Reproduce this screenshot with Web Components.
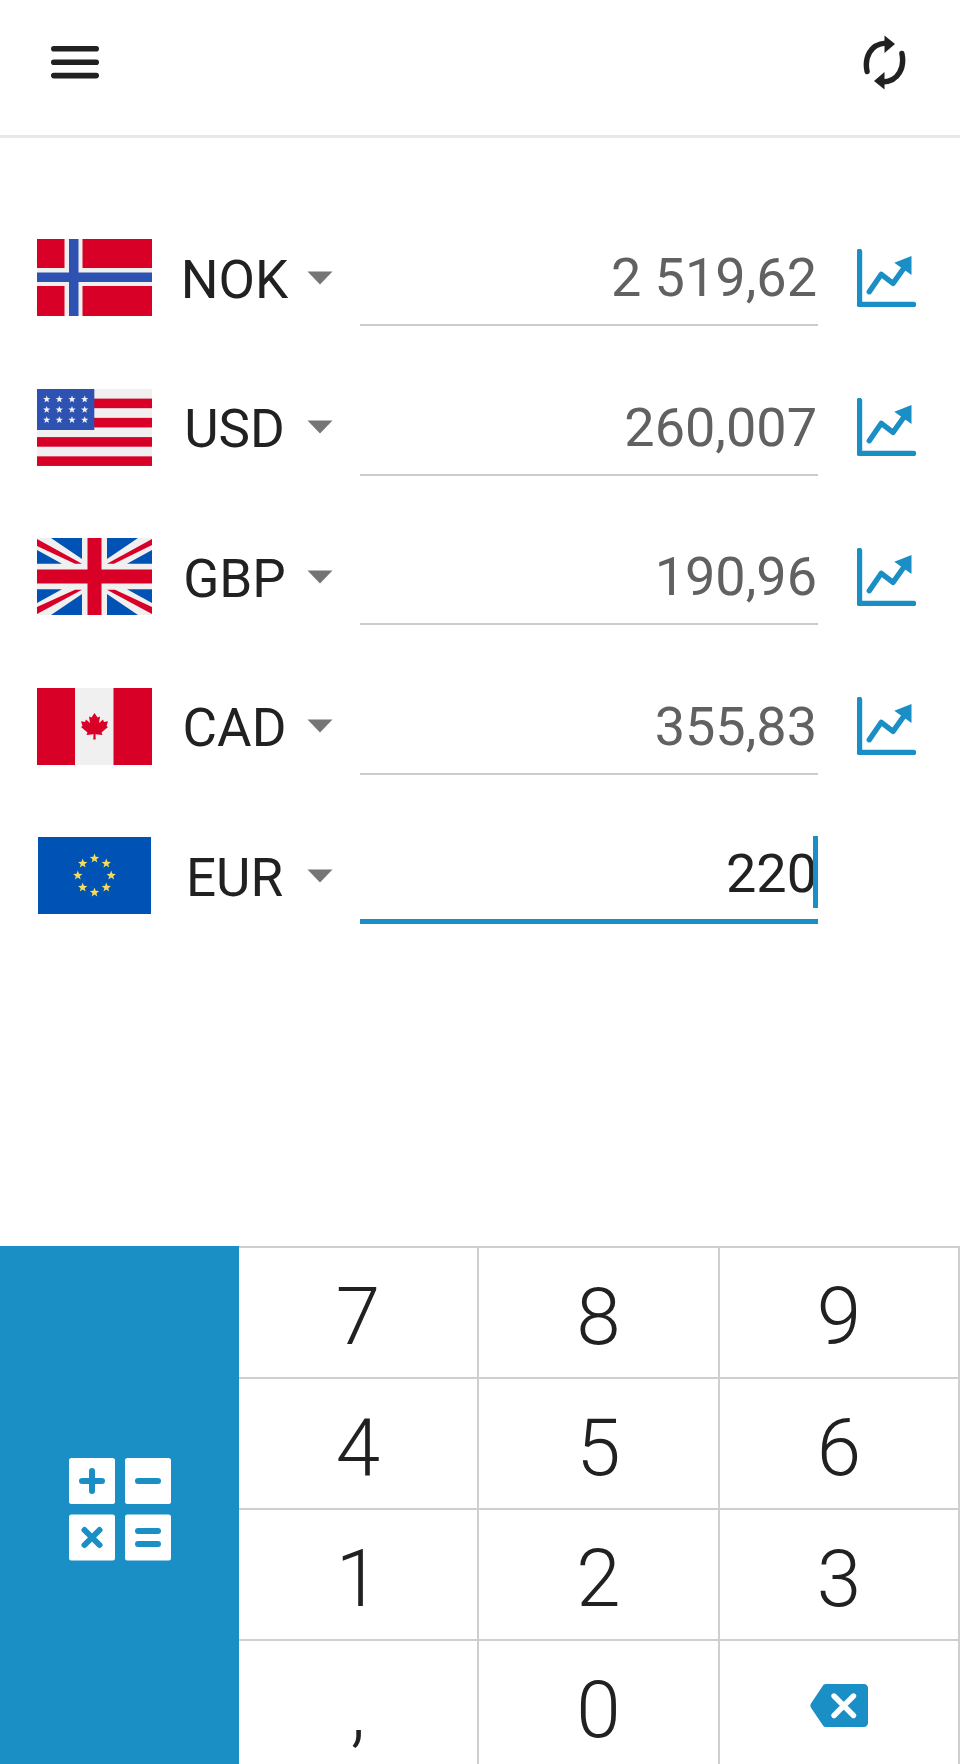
<!DOCTYPE html>
<html>
<head>
<meta charset="utf-8">
<title>Currency converter</title>
<style>
	html, body { margin: 0; height: 1764px; overflow: hidden; background: #fff; }
	body { font-family: Roboto, "Liberation Sans", sans-serif; }
</style>
</head>
<body>
<converter-app>
	<top-bar></top-bar>
	<currency-list>
		<currency-row code="NOK" value="2 519,62"></currency-row>
		<currency-row code="USD" value="260,007"></currency-row>
		<currency-row code="GBP" value="190,96"></currency-row>
		<currency-row code="CAD" value="355,83"></currency-row>
		<currency-row code="EUR" value="220" active></currency-row>
	</currency-list>
	<num-pad></num-pad>
</converter-app>

<script>
const RED = '#d80027';
const WHITE = '#f0f0f0';
const BLUE = '#0052b4';

function star(cx, cy, r, fill) {
	let pts = [];
	for (let i = 0; i < 10; i++) {
		const rad = i % 2 ? r * 0.42 : r;
		const a = -Math.PI / 2 + i * Math.PI / 5;
		pts.push((cx + rad * Math.cos(a)).toFixed(2) + ',' + (cy + rad * Math.sin(a)).toFixed(2));
	}
	return `<polygon points="${pts.join(' ')}" fill="${fill}"/>`;
}

const FLAGS = {
	NOK: `<rect width="115" height="77" fill="${RED}"/>
		<rect x="27.5" width="18" height="77" fill="${WHITE}"/>
		<rect y="29" width="115" height="18" fill="${WHITE}"/>
		<rect x="32" width="9.5" height="77" fill="#2e52b2"/>
		<rect y="33.5" width="115" height="9.5" fill="#2e52b2"/>`,
	USD: () => {
		let s = `<rect width="115" height="77" fill="${WHITE}"/>`;
		for (let i = 0; i < 4; i++) s += `<rect y="${9.6 + i * 19.25}" width="115" height="9.6" fill="${RED}"/>`;
		s += `<rect width="57.3" height="41" fill="#2e52b2"/>`;
		for (const y of [10.3, 20.7, 31]) {
			for (const x of [9.7, 22.3, 35, 47.7]) s += star(x, y, 3.8, WHITE);
		}
		return s;
	},
	GBP: `<rect width="115" height="77" fill="${WHITE}"/>
		<g fill="${BLUE}">
			<polygon points="14,0 45,0 45,21"/><polygon points="0,12 25,25.7 0,25.7"/>
			<polygon points="70,0 101,0 70,21"/><polygon points="115,12 90,25.7 115,25.7"/>
			<polygon points="0,51.3 25,51.3 0,65"/><polygon points="45,56 45,77 14,77"/>
			<polygon points="115,51.3 90,51.3 115,65"/><polygon points="70,56 70,77 101,77"/>
		</g>
		<g fill="${RED}">
			<rect x="50.5" width="14" height="77"/>
			<rect y="31.5" width="115" height="14"/>
			<polygon points="0,1 0,8 38,25.7 45,25.7"/>
			<polygon points="70,25.7 77,25.7 115,7 115,1"/>
			<polygon points="0,69 0,76 45,51.7 38,51.7"/>
			<polygon points="70,51.7 78,51.7 115,69 115,76"/>
		</g>`,
	CAD: `<rect width="115" height="77" fill="${WHITE}"/>
		<rect width="38" height="77" fill="${RED}"/>
		<rect x="76.5" width="38.5" height="77" fill="${RED}"/>
		<polygon fill="${RED}" points="57.5,25 60.5,29.5 63,28.5 62,35 66,31.5 67,34 71,33.3 69.5,38 71,39 64.5,44.5 65.5,47 58.5,46.3 58.7,51.5 56.3,51.5 56.5,46.3 49.5,47 50.5,44.5 44,39 45.5,38 44,33.3 48,34 49,31.5 53,35 52,28.5 54.5,29.5"/>`,
	EUR: () => {
		let s = `<rect width="115" height="77" fill="${BLUE}"/>`;
		for (let i = 0; i < 8; i++) {
			const a = -Math.PI / 2 + i * Math.PI / 4;
			s += star(57.5 + 17 * Math.cos(a), 38.5 + 17 * Math.sin(a), 5, '#f5dc5a');
		}
		return s;
	}
};

class ConverterApp extends HTMLElement {
	constructor() {
		super();
		this.attachShadow({ mode: 'open' });
		this.shadowRoot.innerHTML = `
		<style>
			:host {
				display: flex;
				flex-direction: column;
				height: 1764px;
				overflow: hidden;
				color: #212121;
			}
		</style>
		<slot></slot>`;
	}
}

class TopBar extends HTMLElement {
	constructor() {
		super();
		this.attachShadow({ mode: 'open' });
		this.shadowRoot.innerHTML = `
		<style>
			:host {
				display: flex;
				align-items: center;
				justify-content: space-between;
				box-sizing: border-box;
				height: 138px;
				padding: 0 54px 11px 51px;
				border-bottom: 3px solid #e8e8e8;
				flex: none;
			}
			svg { display: block; }
		</style>
		<svg width="48" height="33" viewBox="0 0 48 33" fill="#212121">
			<rect y="0" width="48" height="5.6" rx="2.8"/>
			<rect y="13.4" width="48" height="5.6" rx="2.8"/>
			<rect y="26.8" width="48" height="5.6" rx="2.8"/>
		</svg>
		<svg width="43" height="55" viewBox="864.5 34.5 43 55" fill="none">
			<g>
				<path d="M868.6 71C865.6 57 872 43.5 887 42.6" stroke="#212121" stroke-width="5.4" stroke-linecap="round"/>
				<polygon points="886,35 896.5,43.5 886,52.5" fill="#212121"/>
			</g>
			<g transform="rotate(180 886 62)">
				<path d="M868.6 71C865.6 57 872 43.5 887 42.6" stroke="#212121" stroke-width="5.4" stroke-linecap="round"/>
				<polygon points="886,35 896.5,43.5 886,52.5" fill="#212121"/>
			</g>
		</svg>`;
	}
}

class CurrencyList extends HTMLElement {
	constructor() {
		super();
		this.attachShadow({ mode: 'open' });
		this.shadowRoot.innerHTML = `
		<style>
			:host {
				display: flex;
				flex-direction: column;
				padding-top: 65px;
				flex: 1;
			}
		</style>
		<slot></slot>`;
	}
}

class CurrencyRow extends HTMLElement {
	static observedAttributes = ['code', 'value', 'active'];

	constructor() {
		super();
		this.attachShadow({ mode: 'open' });
	}

	connectedCallback() {
		this.render();
	}

	attributeChangedCallback() {
		if (this.isConnected) this.render();
	}

	render() {
		const code = this.getAttribute('code');
		const value = this.getAttribute('value');
		const active = this.hasAttribute('active');
		const flag = typeof FLAGS[code] === 'function' ? FLAGS[code]() : FLAGS[code];

		this.shadowRoot.innerHTML = `
		<style>
			:host {
				display: flex;
				align-items: center;
				box-sizing: border-box;
				height: 149.5px;
				padding-left: 37px;
				flex: none;
			}
			.flag { width: 115px; height: 77px; display: block; flex: none; }
			.flag.small { margin: 0 1px; width: 113px; }
			.code-wrap { display: flex; width: 208px; flex: none; }
			.code-label { width: 165px; text-align: center; padding-top: 4px; font-size: 53px; line-height: 70px; color: #212121; }
			.caret { width: 26px; height: 14px; margin-left: -10px; align-self: center; }
			.field {
				position: relative;
				box-sizing: border-box;
				width: 458px;
				height: 97px;
				border-bottom: 2.5px solid #cccccc;
				text-align: right;
				font-size: 54px;
				line-height: 98px;
				color: #616161;
				padding-right: 1px;
				white-space: pre;
				flex: none;
			}
			.field.active {
				border-bottom: 5px solid #1a8fc6;
				color: #212121;
				line-height: 94px;
			}
			.cursor {
				position: absolute;
				right: 0;
				top: 9px;
				width: 5px;
				height: 72px;
				background: #1a8fc6;
			}
			.chart { display: block; margin-left: 39px; width: 59px; height: 58px; flex: none; }
		</style>
		<svg class="flag${code === 'EUR' ? ' small' : ''}" viewBox="0 0 115 77" preserveAspectRatio="none">${flag}</svg>
		<div class="code-wrap">
			<div class="code-label">${code}</div>
			<svg class="caret" viewBox="0 0 26 14"><path d="M0.5 0.5H25.5L13 13.5Z" fill="#757575"/></svg>
		</div>
		<div class="field${active ? ' active' : ''}">${value}${active ? '<div class="cursor"></div>' : ''}</div>
		${active ? '' : `<svg class="chart" viewBox="0 0 59 58" fill="none" stroke="#1a8fc6" stroke-linecap="round" stroke-linejoin="round">
			<path d="M2.5 2.5V55.5H56.5" stroke-width="5.4"/>
			<path d="M12.3 42.7L24.3 25.3L36 34.3L47 19" stroke-width="5.4"/>
			<polygon points="54.5,7 37.3,13.7 54.5,26" fill="#1a8fc6" stroke="none"/>
		</svg>`}`;
	}
}

class PadKey extends HTMLElement {
	constructor() {
		super();
		this.attachShadow({ mode: 'open' });
		this.shadowRoot.innerHTML = `
		<style>
			:host {
				display: flex;
				align-items: center;
				justify-content: center;
				box-sizing: border-box;
				border-top: 2px solid #cfcfcf;
				border-right: 2px solid #cfcfcf;
				font-size: 80px;
				font-weight: 300;
				line-height: 1;
				color: #212121;
				padding-top: 9px;
			}
		</style>
		<slot></slot>`;
	}
}

class NumPad extends HTMLElement {
	constructor() {
		super();
		this.attachShadow({ mode: 'open' });
		const keys = ['7', '8', '9', '4', '5', '6', '1', '2', '3', ',', '0'];
		this.shadowRoot.innerHTML = `
		<style>
			:host {
				display: flex;
				height: 518px;
				flex: none;
				overflow: hidden;
			}
			.side {
				width: 239px;
				height: 527px;
				background: #1a8fc6;
				display: flex;
				align-items: center;
				justify-content: center;
				flex: none;
			}
			.side svg { display: block; }
			.keys {
				display: grid;
				flex: 1;
				grid-template-columns: 240px 241px 240px;
				grid-template-rows: repeat(4, 131px);
			}
		</style>
		<div class="side">
			<svg width="102" height="103" viewBox="0 0 102 103" fill="#fff">
				<rect width="46" height="46" rx="2.5"/>
				<rect x="56" width="46" height="46" rx="2.5"/>
				<rect y="56.5" width="46" height="46" rx="2.5"/>
				<rect x="56" y="56.5" width="46" height="46" rx="2.5"/>
				<g stroke="#1a8fc6" stroke-width="6" stroke-linecap="round" fill="none">
					<path d="M13 23H33M23 13V33"/>
					<path d="M69 23H89"/>
					<path d="M15.5 72L30.5 87M30.5 72L15.5 87"/>
					<path d="M69 73H89M69 86H89"/>
				</g>
			</svg>
		</div>
		<div class="keys">
			${keys.map(k => `<pad-key>${k}</pad-key>`).join('')}
			<pad-key>
				<svg width="58" height="43" viewBox="0 0 58 43" style="display:block;margin-top:-9px">
					<path d="M13 1.5C13.8 .5 14.8 0 16 0H54C56.2 0 58 1.8 58 4V39C58 41.2 56.2 43 54 43H16C14.8 43 13.8 42.5 13 41.5L1 23.8C.2 22.6 .2 20.6 1 19.4Z" fill="#1a8fc6"/>
					<path d="M24 12L43.5 31.5M43.5 12L24 31.5" stroke="#fff" stroke-width="5.4" stroke-linecap="round"/>
				</svg>
			</pad-key>
		</div>`;
	}
}

customElements.define('converter-app', ConverterApp);
customElements.define('top-bar', TopBar);
customElements.define('currency-list', CurrencyList);
customElements.define('currency-row', CurrencyRow);
customElements.define('pad-key', PadKey);
customElements.define('num-pad', NumPad);
</script>
</body>
</html>
